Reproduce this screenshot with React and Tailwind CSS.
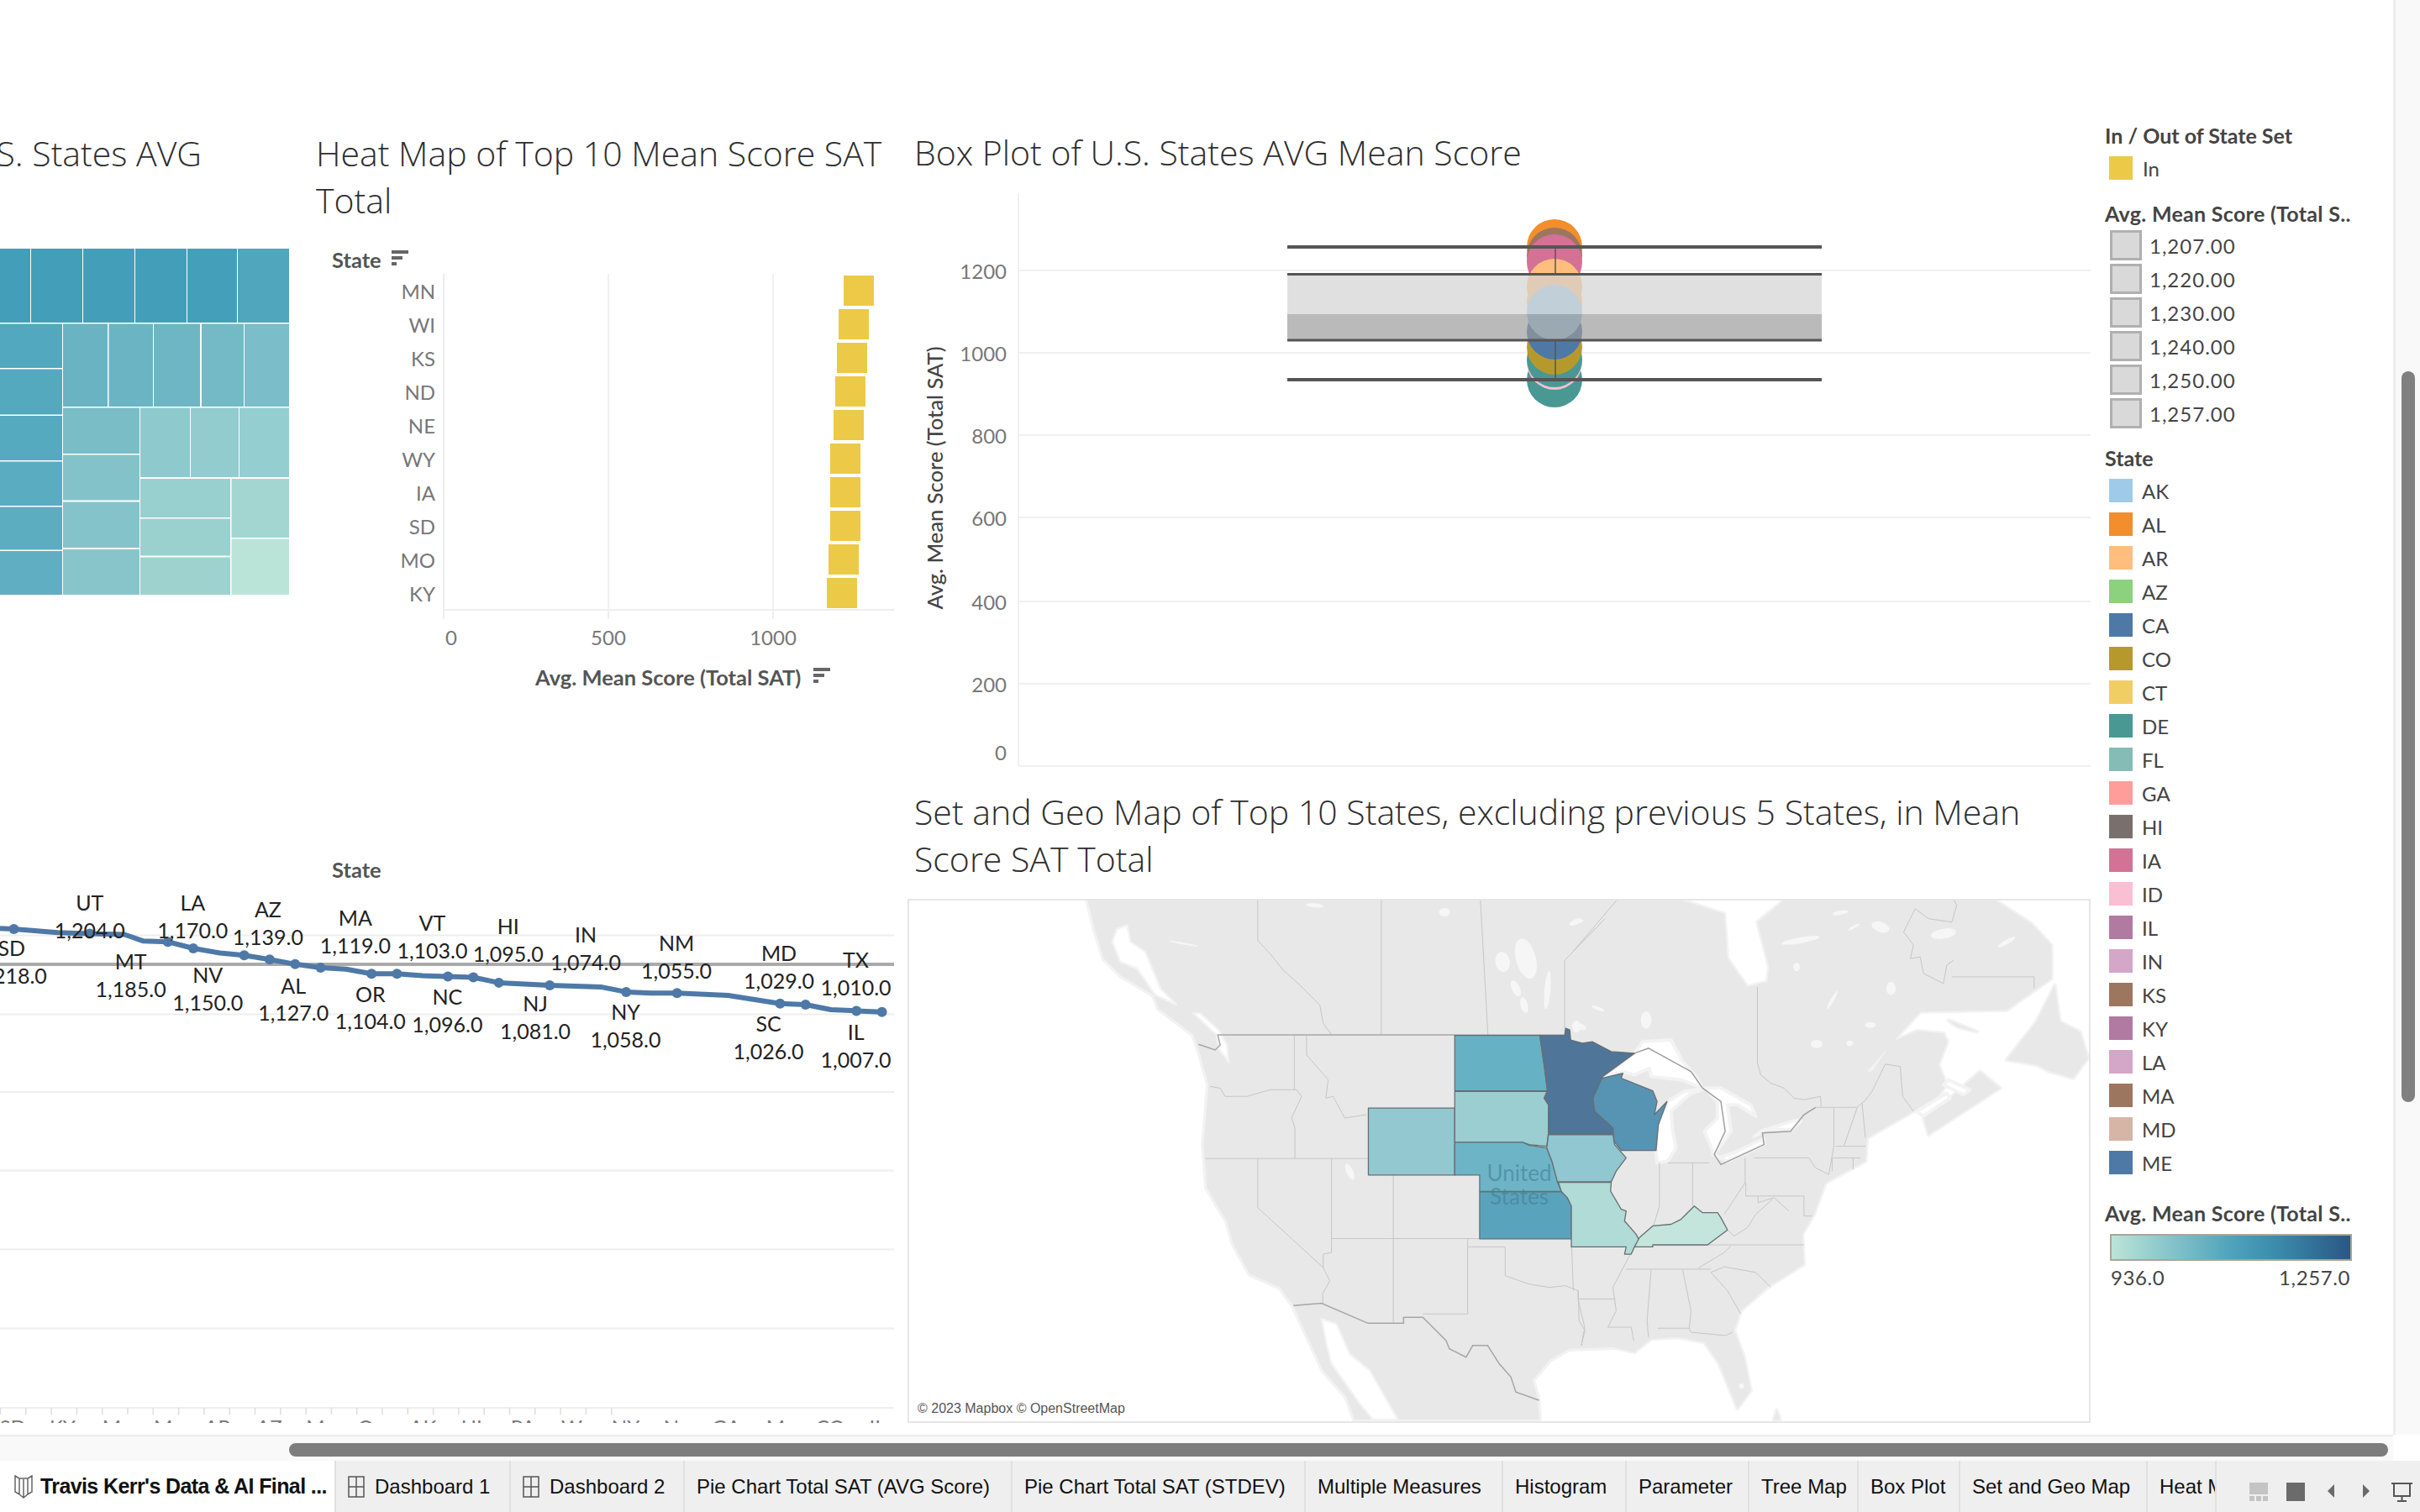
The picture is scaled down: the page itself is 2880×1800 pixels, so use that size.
import React from "react";

const TM = [
  [0,296,36,88,"#439fb9"],[37,296,61,88,"#429eb9"],[99,296,61,88,"#439fb9"],[161,296,61,88,"#439fb9"],[223,296,59,88,"#44a0ba"],[283,296,61,88,"#50a7bd"],
  [0,385.5,74,52.5,"#52a8be"],[0,439.5,74,54,"#54a9bf"],[0,495,74,53,"#56aabf"],[0,549.5,74,52.5,"#5aacc0"],[0,603.5,74,51,"#5dadc0"],[0,656,74,52,"#60aec1"],
  [75,385.5,53,98.5,"#69b3c3"],[129.5,385.5,52.5,98.5,"#6bb4c3"],[183,385.5,55,98.5,"#6eb6c4"],[240,385.5,50,98.5,"#74b9c6"],[291,385.5,53,98.5,"#7bbdc8"],
  [75,485.5,91,54.5,"#7abdc7"],[75,541.5,91,54,"#83c2c9"],[75,597.5,91,54.5,"#85c3ca"],[75,654,91,54,"#88c5cb"],
  [167,485.5,59,82.5,"#8ecacd"],[227,485.5,57,82.5,"#92cccf"],[285,485.5,59,82.5,"#95ced0"],
  [167,570,107,46,"#98cfcf"],[167,617.5,107,44,"#9ad1cf"],[167,663.5,107,44.5,"#9dd2cf"],
  [275.5,570,68.5,70,"#a3d6d1"],[275.5,641.5,68.5,66.5,"#bbe4d8"],
];

const HEAT = [["MN",1004],["WI",998],["KS",996],["ND",994],["NE",992],["WY",988],["IA",988],["SD",988],["MO",986],["KY",984]];

const LINE = [[0,229],[24,231],[100,240],[155,243],[215,245],[248,262],[290,264],[334,281],[380,293],[422,299],[466,310],[510,322],[554,331],[598,335],[642,347],[686,347],[730,352],[774,354],[818,356],[862,370],[950,377],[1038,381],[1082,394],[1126,397],[1170,397],[1258,403],[1348,424],[1392,427],[1436,440],[1480,443],[1524,446]];
const MARKS = [24,155,290,334,422,466,510,554,642,686,774,818,862,950,1082,1170,1348,1392,1480,1524];
const LABELS = [
  ["UT","1,204.0",155,165,237],["LA","1,170.0",333,165,237],["AZ","1,139.0",463,182,254],["MA","1,119.0",614,204,276],["VT","1,103.0",747,217,289],
  ["HI","1,095.0",878,226,298],["IN","1,074.0",1012,248,320],["NM","1,055.0",1169,269,341],["MD","1,029.0",1346,296,368],["TX","1,010.0",1479,313,385],
  ["SD","1,218.0",20,283,354],["MT","1,185.0",226,317,389],["NV","1,150.0",359,352,424],["AL","1,127.0",507,379,450],["OR","1,104.0",640,401,472],
  ["NC","1,096.0",773,409,481],["NJ","1,081.0",925,426,498],["NY","1,058.0",1081,448,520],["SC","1,026.0",1328,479,551],["IL","1,007.0",1479,500,572],
];
const AXIS = [["SD",22],["KY",108],["M",193],["M",282],["AR",376],["AZ",465],["M",545],["O",632],["AK",731],["HI",815],["PA",904],["W",988],["NY",1081],["N",1160],["GA",1255],["M",1340],["CO",1435],["IL",1516]];
const lx = (x) => x / 1.452;
const ly = (y) => 998.5 + y / 2.178;

const STATES = [["AK","#a0cbe8"],["AL","#f28e2b"],["AR","#ffbe7d"],["AZ","#8cd17d"],["CA","#4e79a7"],["CO","#b6992d"],["CT","#f1ce63"],["DE","#499894"],["FL","#86bcb6"],["GA","#ff9d9a"],["HI","#79706e"],["IA","#d37295"],["ID","#fabfd2"],["IL","#b07aa1"],["IN","#d4a6c8"],["KS","#9d7660"],["KY","#b07aa1"],["LA","#d4a6c8"],["MA","#9d7660"],["MD","#d7b5a6"],["ME","#4e79a7"]];
const SCORES = ["1,207.00","1,220.00","1,230.00","1,240.00","1,250.00","1,257.00"];

const TABS = [
  ["Dashboard 1",208,true],["Dashboard 2",207,true],["Pie Chart Total SAT (AVG Score)",390],["Pie Chart Total SAT (STDEV)",349],["Multiple Measures",235],["Histogram",147],["Parameter",146],["Tree Map",130],["Box Plot",121],["Set and Geo Map",223],["Heat Map",82],
];

/* Map coordinates: west crop units; the east crop is offset by 1467 units. */
const WEST_LAND = "M10 0L35 100L60 180L110 230L210 290L225 330L330 410L350 470L375 560L360 740L370 870L430 970L450 1040L500 1130L590 1170L630 1225L660 1290L720 1420L790 1500L815 1568L1370 1568L1365 1500L1350 1450L1400 1390L1460 1355L1600 1350L1600 0Z";
const EAST_LAND = "M-5 0L320 0L460 45L470 180L530 265L590 250L595 205L560 70L645 0L1270 0L1385 75L1445 140L1445 240L1310 335L1050 340L1000 395L890 520L905 520L965 430L1040 398L1120 405L1132 430L1105 500L1130 560L1100 600L1030 640L890 720L885 790L765 855L730 950L695 1010L700 1100L590 1170L510 1240L490 1300L520 1380L540 1480L500 1535L445 1400L400 1335L320 1320L240 1325L190 1365L100 1345L-5 1350Z";
const EAST_ISLANDS = [
  "M1060 660L1140 600L1230 520L1290 570L1075 710Z",
  "M1310 485L1400 370L1455 260L1470 370L1530 400L1555 480L1510 540L1440 520L1400 500Z",
  "M1135 365L1220 400L1160 385Z",
  "M610 1568L618 1540L628 1568Z",
];
const WEST_WATER = [
  "M715 1265L760 1280L800 1370L860 1420L945 1568L870 1568L830 1520L745 1400L730 1340Z",
  "M100 90L130 80L140 130L185 160L230 270L280 320L215 290L160 210L110 190L85 130Z",
  "M330 345L350 345L405 395L430 440L435 490L405 450L400 410Z",
];
const WEST_LAKES = [
  [1330,180,30,62,-15],[1395,275,9,58,5],[1325,320,11,24,-15],[1260,190,22,30,-10],[1300,270,12,26,-25],[1085,40,16,13,0],[695,20,26,6,5],[1480,70,20,8,-25],[1495,385,18,9,20],[800,822,10,26,-25],[300,135,45,3,10],
];
const EAST_WATER = [
  "M95 535L190 465L215 430L300 425L335 490L375 535L395 570L330 545L240 535L235 510L190 530L155 520L135 525Z",
  "M255 760L255 690L290 610L340 580L400 570L355 590L300 640L305 700L315 750L290 790L258 795Z",
  "M400 570L450 570L540 620L555 655L500 620L470 620L480 700L460 730L430 770L400 700L440 660L440 610Z",
  "M425 770L470 790L580 740L580 722L500 760L450 778Z",
  "M550 715L590 695L665 695L692 668L670 668L600 690L570 700Z",
  "M1135 545L1200 575L1180 590L1120 560Z",
  "M1130 585L1040 640L1058 655L1140 600Z",
];
const EAST_LAKES = [
  [225,365,16,26,0],[738,437,18,12,0],[838,435,10,8,0],[900,380,16,9,0],[785,305,5,32,30],[690,125,58,9,-10],[810,42,24,6,-10],[930,85,28,15,20],[1120,105,38,15,-10],[1310,130,30,7,-30],[678,205,10,13,0],[850,85,20,4,-30],[962,270,14,20,0],[80,330,20,5,20],[15,385,13,18,0],[15,70,22,6,-15],[512,1467,8,8,0],
];
const WEST_LINES = [
  "M523 0L523 125L560 165L600 215L650 260L710 320L720 375L745 408","M895 0V410","M1193 0L1216 410","M1568 60L1447 185L1447 410",
  "M380 565L410 570L425 595L490 595L560 575L640 575","M633 410V575","M640 575L655 595L625 660L635 690V782","M670 410V470L735 545L728 600L750 595L785 660L850 650",
  "M365 782H856","M523 782V930L720 1110L740 1150L718 1190L720 1220","M745 782V1065L720 1070L720 1110","M931 832V1278","M745 1023H1190","M1155 1023V1250H1020",
  "M1155 1048H1268V1135L1340 1160L1400 1170L1450 1165L1488 1180","M1468 1048L1473 1180","M1488 1205H1600","M1488 1180L1490 1270L1508 1300L1497 1345",
];
const WEST_DARK = [
  "M345 438L395 455L410 440L403 410H1116","M1447 411H1116",
  "M630 1225L715 1218L855 1278H962V1260H1020L1090 1330L1100 1355L1150 1380L1170 1345L1215 1345L1250 1400L1285 1440L1300 1485L1370 1510",
];
const EAST_LINES = [
  "M140 0L0 165","M560 265V495L570 530L600 555L640 570L670 600L700 605L750 595L752 625",
  "M1150 185L1130 200L1120 255L1060 225L1050 175L1020 180L1030 140L1000 100L1035 30L1075 60L1145 70L1160 20L1150 0","M1145 235H1393V270",
  "M290 795H415","M265 795V925L240 1010","M365 795V925","M523 780V855L460 950","M550 780H715L735 810L775 830","M525 855V895H700","M562 895V915L610 900L655 940","M700 895V955H725",
  "M470 997L490 1015L530 990L555 950L605 905","M735 628H860L880 610","M790 630L790 745L775 830","M860 630L820 745","M875 615L885 720","M795 745H885","M787 780H870","M785 780V820","M848 780V815",
  "M880 612L905 580L945 498L990 505L997 595L1030 640","M245 1042H700","M480 1045L460 1065L385 1110V1115","M165 1115H420",
  "M420 1125L460 1108L555 1125L600 1170","M420 1125L470 1180L510 1250","M240 1117L228 1270L232 1320","M335 1117L360 1240L355 1295","M260 1293H355L360 1305L465 1315L485 1305",
  "M185 1055L125 1170L135 1240L110 1290H180L188 1330","M20 1180V1205H130","M20 1205L40 1290L30 1345",
];
const EAST_DARK = [
  "M190 465L232 450L360 520L395 570L450 610L463 700L430 770L450 800L580 740L575 705L660 700L700 650L735 628",
];
const COLORED = [
  ["M856 630H1116V832H856Z","#93c8d0"],
  ["M1116 411H1372L1385 500L1395 578H1116Z","#67b1c5"],
  ["M1116 580H1395L1385 600L1398 620V705L1393 745L1340 740L1320 733H1116Z","#9bced1"],
  ["M1116 733H1320L1340 742L1393 750L1410 795L1425 852L1437 881H1191V832H1116Z","#6db4c6"],
  ["M1191 882H1437L1455 900L1467 925V1024H1191Z","#5aa3bc"],
  ["M1372 411H1447L1450 390L1462 395L1465 425L1500 435L1530 430L1587 460L1657 465L1562 535L1532 600L1537 640L1592 690V708H1398V620L1385 600L1395 578L1385 500Z","#4f7599"],
  ["M1559 540L1622 525L1617 540L1712 578L1725 610L1717 650L1755 610L1729 680L1722 758H1617L1595 730L1592 690L1537 640L1532 600Z","#5793b2"],
  ["M1398 710H1592L1597 740L1632 780L1602 820L1587 852H1425L1410 795L1393 750Z","#90c7d0"],
  ["M1428 854H1587L1585 880L1617 935L1632 940L1627 970L1662 1010L1672 1030L1657 1048L1647 1070H1627L1632 1048H1467V925L1455 900L1437 881Z","#b0dbd6"],
  ["M1672 1020L1712 985L1767 980L1797 965L1837 925L1862 945L1907 945L1917 960L1937 997L1877 1042H1712V1048H1657Z","#c3e5dc"],
];

const Title = ({ className = "", children }) => (
  <div className={`text-[41px] leading-[56px] font-light text-[#2e2e2e] font-['Open_Sans',sans-serif] ${className}`}>{children}</div>
);

function SortIcon({ x, y }) {
  return (
    <g fill="#666">
      <rect x={x} y={y} width="20" height="4" />
      <rect x={x} y={y + 7} width="13" height="4" />
      <rect x={x} y={y + 14} width="6" height="4" />
    </g>
  );
}

function GridIcon() {
  return (
    <svg width="20" height="28" viewBox="0 0 20 28" className="mr-[12px] shrink-0" fill="none" stroke="#555" strokeWidth="1.5">
      <rect x="1" y="2" width="18" height="24" />
      <path d="M10 2V26M1 14H19" />
    </svg>
  );
}

const Lakes = ({ items }) => items.map(([cx, cy, rx, ry, r], i) => (
  <ellipse key={i} cx={cx} cy={cy} rx={rx} ry={ry} transform={`rotate(${r} ${cx} ${cy})`} />
));

const Lines = ({ items, stroke, width }) => items.map((d, i) => (
  <path key={i} d={d} fill="none" stroke={stroke} strokeWidth={width} vectorEffect="non-scaling-stroke" />
));

export default function App() {
  return (
    <div className="w-[2880px] h-[1800px] overflow-hidden flex flex-col bg-white text-[#333] font-[Lato,sans-serif]">
      <div className="flex h-[1708px] shrink-0">
        <div className="w-[2848px] flex shrink-0">
          {/* Left column */}
          <div className="w-[1080px] shrink-0 flex flex-col">
            <div className="flex h-[1020px]">
              <div className="w-[376px] shrink-0 flex flex-col">
                <Title className="w-[240px] mt-[154px] h-[56px] flex justify-end items-center whitespace-nowrap overflow-hidden">
                  Tree Map of U.S. States AVG
                </Title>
                <svg viewBox="0 296 344 412" className="w-[344px] h-[412px] mt-[86px]">
                  {TM.map(([x, y, w, h, c], i) => <rect key={i} x={x} y={y} width={w} height={h} fill={c} />)}
                </svg>
              </div>
              <div className="flex-1 flex flex-col">
                <Title className="mt-[154px] w-[690px]">Heat Map of Top 10 Mean Score SAT Total</Title>
                <svg viewBox="376 290 688 540" className="w-[688px] h-[540px] mt-[24px]">
                  <text x="395" y="309" dominantBaseline="central" fontSize="25.5" fontWeight="700" fill="#555">State</text>
                  <SortIcon x={466} y={298} />
                  <path d="M724 326V726M920 326V726" stroke="#f0f0f0" strokeWidth="2" />
                  <path d="M528 326V737M528 726H1064M724 726V737M920 726V737" stroke="#eee" strokeWidth="2" fill="none" />
                  {HEAT.map(([s, x], i) => (
                    <g key={s}>
                      <text x="518" y={346 + i * 40} textAnchor="end" dominantBaseline="central" fontSize="24" fill="#777">{s}</text>
                      <rect x={x} y={328 + i * 40} width="36" height="36" fill="#edc948" />
                    </g>
                  ))}
                  <text x="537" y="758" textAnchor="middle" dominantBaseline="central" fontSize="24" fill="#777">0</text>
                  <text x="724" y="758" textAnchor="middle" dominantBaseline="central" fontSize="24" fill="#777">500</text>
                  <text x="920" y="758" textAnchor="middle" dominantBaseline="central" fontSize="24" fill="#777">1000</text>
                  <text x="637" y="806" dominantBaseline="central" fontSize="25.5" fontWeight="700" fill="#555">Avg. Mean Score (Total SAT)</text>
                  <SortIcon x={968} y={795} />
                </svg>
              </div>
            </div>
            <svg viewBox="0 1020 1064 674" className="w-[1064px] h-[674px]">
              <text x="395" y="1035" dominantBaseline="central" fontSize="25.5" fontWeight="700" fill="#555">State</text>
              {[1113.5,1207.5,1300,1393.5,1487.5,1581.5].map((y) => <path key={y} d={`M0 ${y}H1064`} stroke="#eee" strokeWidth="2" />)}
              <path d="M0 1148H1064" stroke="#aaa" strokeWidth="4" />
              <path d="M0 1676H1064" stroke="#eee" strokeWidth="2" />
              {Array.from({ length: 25 }, (_, i) => <path key={i} d={`M${i * 30.3 + 0.5} 1676V1684`} stroke="#ddd" strokeWidth="1.5" />)}
              <polyline points={LINE.map(([x, y]) => `${lx(x)},${ly(y) + 1.5}`).join(" ")} fill="none" stroke="#4e79a7" strokeWidth="6" strokeLinejoin="round" />
              {MARKS.map((x) => {
                const p = LINE.find((q) => q[0] === x);
                return <circle key={x} cx={lx(x)} cy={ly(p[1]) + 1.5} r="6" fill="#4e79a7" />;
              })}
              {LABELS.map(([s, v, x, a, b]) => (
                <g key={s} textAnchor="middle" fontSize="25" fill="#222">
                  <text x={lx(x)} y={ly(a)} dominantBaseline="central">{s}</text>
                  <text x={lx(x)} y={ly(b)} dominantBaseline="central">{v}</text>
                </g>
              ))}
              {AXIS.map(([s, x], i) => <text key={i} x={lx(x)} y="1708" textAnchor="middle" fontSize="24" fill="#777">{s}</text>)}
            </svg>
          </div>

          {/* Middle column */}
          <div className="w-[1408px] shrink-0 flex flex-col">
            <Title className="mt-[153px] ml-[8px] whitespace-nowrap">Box Plot of U.S. States AVG Mean Score</Title>
            <svg viewBox="1080 222 1408 698" className="w-[1408px] h-[698px] mt-[13px]">
              <path d="M1212 230V912" stroke="#f0f0f0" strokeWidth="2" />
              {[[1200,322],[1000,420],[800,518],[600,616],[400,716],[200,814],[0,912]].map(([v, y]) => (
                <g key={v}>
                  <path d={`M1212 ${y}H2488`} stroke="#f0f0f0" strokeWidth="2" />
                  <text x="1198" y={v === 0 ? y - 17 : y} textAnchor="end" dominantBaseline="central" fontSize="24" fill="#777">{v}</text>
                </g>
              ))}
              <text transform="translate(1112 569) rotate(-90)" textAnchor="middle" dominantBaseline="central" fontSize="25.5" fontWeight="500" fill="#444">Avg. Mean Score (Total SAT)</text>
              <g>
                <circle cx="1850" cy="294" r="33" fill="#f28e2b" />
                <circle cx="1850" cy="304" r="33" fill="#9d7660" />
                <circle cx="1850" cy="312" r="33" fill="#d37295" />
                <circle cx="1850" cy="341" r="33" fill="#ffbe7d" />
                <circle cx="1850" cy="452" r="33" fill="#499894" />
                <circle cx="1850" cy="431" r="33" fill="#fabfd2" />
                <circle cx="1850" cy="428" r="33" fill="#499894" />
                <circle cx="1850" cy="413" r="33" fill="#b6992d" />
                <circle cx="1850" cy="395" r="33" fill="#4e79a7" />
                <circle cx="1850" cy="359" r="33" fill="#ffbe7d" />
                <circle cx="1850" cy="372" r="33" fill="#a0cbe8" />
              </g>
              <rect x="1532" y="326" width="636" height="48" fill="#d1d1d1" fillOpacity="0.68" />
              <rect x="1532" y="374" width="636" height="31" fill="#999" fillOpacity="0.68" />
              <path d="M1851 294V326M1851 405V452" stroke="#555" strokeWidth="1.5" />
              <path d="M1532 294H2168M1532 452H2168" stroke="#555" strokeWidth="4" />
              <path d="M1532 326.5H2168M1532 405H2168" stroke="#555" strokeWidth="3" />
            </svg>
            <Title className="mt-[18px] ml-[8px] w-[1380px]">Set and Geo Map of Top 10 States, excluding previous 5 States, in Mean Score SAT Total</Title>
            <div className="relative mt-[20px] w-[1408px] h-[624px] border-2 border-[#e6e6e6] bg-white overflow-hidden">
              <svg viewBox="1082 1072 1404 620" className="w-[1404px] h-[620px] block">
                <g transform="translate(1290 1070) scale(0.3954)">
                  <g fill="#f2f2f2" stroke="#f2f2f2" strokeLinejoin="round">
                    <path d={WEST_LAND} strokeWidth="16" />
                    <g transform="translate(1467 0)" strokeWidth="12">
                      <path d={EAST_LAND} />
                      {EAST_ISLANDS.map((d, i) => <path key={i} d={d} />)}
                    </g>
                  </g>
                  <g fill="#e8e8e8">
                    <path d={WEST_LAND} />
                    <g transform="translate(1467 0)">
                      <path d={EAST_LAND} />
                      {EAST_ISLANDS.map((d, i) => <path key={i} d={d} />)}
                    </g>
                  </g>
                  <g fill="#fff">
                    {WEST_WATER.map((d, i) => <path key={i} d={d} stroke="#f3f3f3" strokeWidth="6" />)}
                  </g>
                  <g fill="#f6f6f6"><Lakes items={WEST_LAKES} /></g>
                  <g transform="translate(1467 0)">
                    <g fill="#fff">
                      {EAST_WATER.map((d, i) => <path key={i} d={d} stroke="#f3f3f3" strokeWidth="10" strokeLinejoin="round" />)}
                    </g>
                    <g fill="#f6f6f6"><Lakes items={EAST_LAKES} /></g>
                    <Lines items={EAST_LINES} stroke="#c6c6c6" width="1" />
                    <Lines items={EAST_DARK} stroke="#a0a0a0" width="1.5" />
                  </g>
                  <Lines items={WEST_LINES} stroke="#c6c6c6" width="1" />
                  <Lines items={WEST_DARK} stroke="#a6a6a6" width="1.5" />
                  {COLORED.map(([d, c], i) => (
                    <path key={i} d={d} fill={c} stroke="#666f73" strokeWidth="1.3" strokeLinejoin="round" vectorEffect="non-scaling-stroke" />
                  ))}
                </g>
              </svg>
              <div className="absolute left-[676px] top-[310px] w-[100px] text-center text-[26px] leading-[28px] text-[#3f7f97]/60">United States</div>
              <div className="absolute left-[5px] bottom-[4px] px-[5px] h-[22px] leading-[22px] text-[16px] text-[#555] bg-white/70 whitespace-nowrap font-['Liberation_Sans',sans-serif]">© 2023 Mapbox © OpenStreetMap</div>
            </div>
          </div>

          {/* Legends */}
          <div className="flex-1 pl-[17px] pt-[147px] text-[24px] leading-[28px] text-[#444]">
            <div className="font-bold text-[25px] h-[28px] whitespace-nowrap">In / Out of State Set</div>
            <div className="mt-[5px] h-[40px] flex items-center pl-[5px]">
              <span className="w-[28px] h-[28px] bg-[#edc948] mr-[12px]" /><span className="translate-y-[1px]">In</span>
            </div>
            <div className="mt-[20px] h-[28px] font-bold text-[25px] whitespace-nowrap tracking-[0.3px]">Avg. Mean Score (Total S..</div>
            <div className="mt-[4px]">
              {SCORES.map((s) => (
                <div key={s} className="h-[40px] flex items-center pl-[6px]">
                  <span className="w-[38px] h-[36px] border-[3px] border-[#b0b0b0] bg-[#d9d9d9] mr-[9px]" /><span className="translate-y-[1px] tracking-[1px]">{s}</span>
                </div>
              ))}
            </div>
            <div className="mt-[19px] h-[28px] font-bold text-[25px]">State</div>
            <div className="mt-[5px]">
              {STATES.map(([s, c]) => (
                <div key={s} className="h-[40px] flex items-center pl-[5px]">
                  <span className="w-[28px] h-[28px] mr-[11px]" style={{ backgroundColor: c }} /><span className="translate-y-[1px]">{s}</span>
                </div>
              ))}
            </div>
            <div className="mt-[26px] h-[28px] font-bold text-[25px] whitespace-nowrap tracking-[0.3px]">Avg. Mean Score (Total S..</div>
            <div className="mt-[11px] ml-[6px] w-[288px] h-[32px] border-[2px] border-[#a8a598] bg-[linear-gradient(to_right,#bbe4d8,#8fcacd_20%,#4fa3bb_50%,#3a8aab_70%,#2a5783)]" />
            <div className="mt-[6px] ml-[7px] w-[285px] flex justify-between tracking-[0.6px]">
              <span>936.0</span><span>1,257.0</span>
            </div>
          </div>
        </div>

        {/* Vertical scrollbar */}
        <div className="w-[32px] shrink-0 border-l-[3px] border-[#ececec] bg-[#f9f9f9] pl-[7px] pt-[442px]">
          <div className="w-[16px] h-[870px] rounded-[8px] bg-[#808080]" />
        </div>
      </div>

      {/* Horizontal scrollbar */}
      <div className="flex h-[31px] shrink-0">
        <div className="w-[2848px] border-t-[2px] border-[#ececec] bg-[#f9f9f9] pl-[344px] pt-[8px]">
          <div className="w-[2498px] h-[16px] rounded-[8px] bg-[#7d7d7d]" />
        </div>
        <div className="flex-1 bg-white" />
      </div>

      {/* Tabs */}
      <div className="flex h-[61px] shrink-0 bg-[#efefef] text-[24px] text-[#111] font-['Liberation_Sans',sans-serif]">
        <div className="w-[400px] shrink-0 bg-white border-r-2 border-[#e0e0e0] flex items-center pl-[17px] font-bold whitespace-nowrap overflow-hidden">
          <svg width="22" height="30" viewBox="0 0 22 30" className="mr-[9px] shrink-0" fill="none" stroke="#666" strokeWidth="1.5">
            <path d="M1 2L6 5V24L1 21ZM21 2L16 5V24L21 21ZM6 5H16M6 24L11 28L16 24M11 6V28" />
          </svg>
          <span className="text-[25px] tracking-[-0.6px]">Travis Kerr's Data &amp; AI Final ...</span>
        </div>
        {TABS.map(([t, w, g]) => (
          <div key={t} className="shrink-0 border-r-2 border-[#e0e0e0] flex items-center pl-[14px] whitespace-nowrap overflow-hidden" style={{ width: w }}>
            {g && <GridIcon />}{t}
          </div>
        ))}
        <svg viewBox="2638 1739 242 61" className="w-[242px] h-[61px] shrink-0">
          <rect x="2677" y="1765" width="22" height="14" fill="#c4c4c4" />
          <path d="M2677 1781h6v6h-6zM2685 1781h6v6h-6zM2693 1781h6v6h-6z" fill="#c4c4c4" />
          <rect x="2721" y="1765" width="22" height="22" fill="#6b6b6b" />
          <path d="M2778 1767L2770 1775L2778 1783Z" fill="#6b6b6b" />
          <path d="M2812 1767L2820 1775L2812 1783Z" fill="#6b6b6b" />
          <path d="M2846 1766H2871M2849 1767V1781H2868V1767M2858.5 1781V1787M2853 1787H2864" fill="none" stroke="#555" strokeWidth="2" />
        </svg>
      </div>
    </div>
  );
}
